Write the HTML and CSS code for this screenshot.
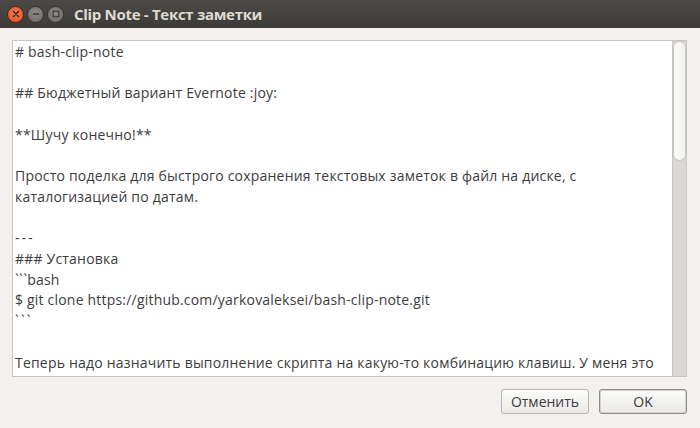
FILE: index.html
```html
<!DOCTYPE html>
<html lang="ru">
<head>
<meta charset="utf-8">
<title>Clip Note - Текст заметки</title>
<link rel="stylesheet" href="styles.css">
</head>
<body>
<div class="window">
  <header class="titlebar">
    <div class="controls">
      <span class="wbtn close"><svg width="8" height="8" viewBox="0 0 8 8"><path d="M1.5 1.5L6.5 6.5M6.5 1.5L1.5 6.5" stroke="#3c1a10" stroke-width="1.4" stroke-linecap="round"/></svg></span>
      <span class="wbtn"><svg width="8" height="8" viewBox="0 0 8 8"><path d="M1 4H7" stroke="#3a3a36" stroke-width="1.5"/></svg></span>
      <span class="wbtn"><svg width="8" height="8" viewBox="0 0 8 8"><rect x="1.2" y="1.2" width="5.6" height="5.6" fill="none" stroke="#3a3a36" stroke-width="1.2"/></svg></span>
    </div>
    <div class="title">Clip Note - Текст заметки</div>
  </header>
  <main class="content">
    <div class="editor">
      <div class="text"><div># bash-clip-note</div><div>&nbsp;</div><div>## Бюджетный вариант Evernote :joy:</div><div>&nbsp;</div><div>**Шучу конечно!**</div><div>&nbsp;</div><div>Просто поделка для быстрого сохранения текстовых заметок в файл на диске, с</div><div>каталогизацией по датам.</div><div>&nbsp;</div><div class="spaced">---</div><div>### Установка</div><div>```bash</div><div>$ git clone https://github.com/yarkovaleksei/bash-clip-note.git</div><div class="spaced">```</div><div>&nbsp;</div><div>Теперь надо назначить выполнение скрипта на какую-то комбинацию клавиш. У меня это</div></div>
      <div class="scrollbar"><div class="thumb"></div></div>
    </div>
    <div class="actions">
      <button class="btn">Отменить</button>
      <button class="btn ok">OK</button>
    </div>
  </main>
</div>
</body>
</html>
```
FILE: styles.css
```css
* { box-sizing: border-box; }
html, body { margin: 0; padding: 0; }
body {
  width: 700px; height: 428px; overflow: hidden;
  background: #f2f1f0;
  font-family: "Open Sans", "DejaVu Sans", sans-serif;
}
.window { display: flex; flex-direction: column; height: 428px; }
.titlebar {
  height: 28px; flex: none;
  background: linear-gradient(#4b4a46, #3c3b37);
  display: flex; align-items: center;
  padding-left: 7px;
}
.controls { display: flex; gap: 3px; }
.wbtn {
  width: 17px; height: 17px; border-radius: 50%;
  background: radial-gradient(circle at 50% 40%, #8c8b86, #6a6964);
  border: 1px solid #35342f;
  display: flex; align-items: center; justify-content: center;
}
.wbtn.close { background: radial-gradient(circle at 50% 40%, #f47c52, #e0501d); border-color: #3a2a20; }
.title {
  margin-left: 10px;
  color: #dfdbd2; font-weight: bold; font-size: 15px;
  font-family: "Open Sans", sans-serif;
  letter-spacing: -0.3px;
}
.content { flex: 1; display: flex; flex-direction: column; padding: 12px 13px 0 12px; }
.editor {
  height: 337px; border: 1px solid #c9c6c2; background: #fff;
  display: flex; overflow: hidden;
}
.text {
  flex: 1; padding: 0 2px; padding-top: 1px;
  font-size: 14px; line-height: 20.7px; color: #3c3c3c;
  letter-spacing: 0.2px; white-space: nowrap;
  overflow: hidden;
}
.spaced { letter-spacing: 2px; }
.scrollbar {
  width: 14px; flex: none; background: #d9d8d6;
  border-left: 1px solid #c9c6c2;
}
.thumb {
  height: 120px; width: 13px;
  border: 1px solid #c9c6c2; border-radius: 7px;
  background: linear-gradient(90deg, #fafafa, #f3f2f1);
}
.actions { display: flex; justify-content: flex-end; gap: 10px; margin-top: 12px; }
.btn {
  width: 88px; height: 25px;
  border: 1px solid #b7b4ae; border-radius: 3px;
  background: linear-gradient(#fbfbfa, #ebeae8);
  font-family: "Open Sans", sans-serif; font-size: 14px; color: #3c3c3c;
  padding: 0;
}
.btn.ok { border-color: #8f8c86; box-shadow: inset 0 0 0 1px #d3d1cd; }
```
